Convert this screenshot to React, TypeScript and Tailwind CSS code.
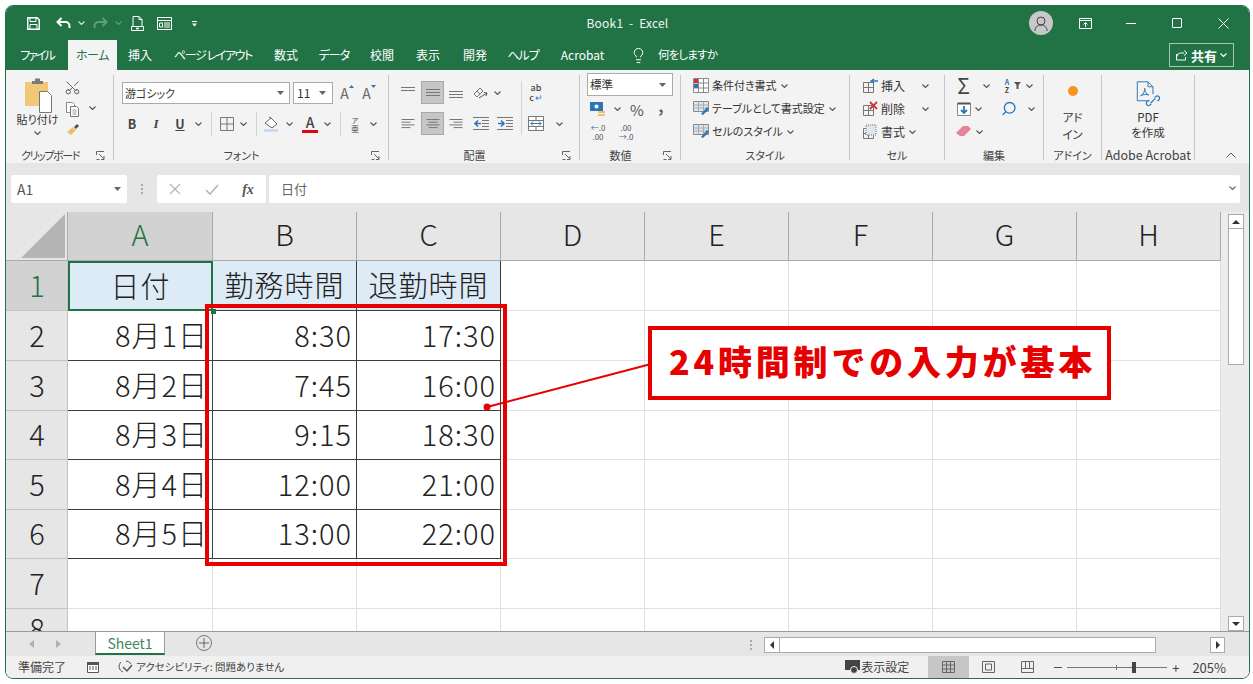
import type { ReactNode } from "react";
import { Scissors, Search, Lightbulb } from "lucide-react";

const columns = ["A", "B", "C", "D", "E", "F", "G", "H"];

const rows = [
  ["日付", "勤務時間", "退勤時間"],
  ["8月1日", "8:30", "17:30"],
  ["8月2日", "7:45", "16:00"],
  ["8月3日", "9:15", "18:30"],
  ["8月4日", "12:00", "21:00"],
  ["8月5日", "13:00", "22:00"],
  [],
  [],
];

const tabs = [
  { label: "ファイル", w: "w-[62px] tracking-[-2px]" },
  { label: "ホーム", w: "w-[49px] tracking-[-0.5px]", active: true },
  { label: "挿入", w: "w-[46px]" },
  { label: "ページ レイアウト", w: "w-[100px] tracking-[-1.400px]" },
  { label: "数式", w: "w-[46px]" },
  { label: "データ", w: "w-[50px] tracking-[-1px]" },
  { label: "校閲", w: "w-[46px]" },
  { label: "表示", w: "w-[46px]" },
  { label: "開発", w: "w-[48px]" },
  { label: "ヘルプ", w: "w-[48px] tracking-[-1px]" },
  { label: "Acrobat", w: "w-[71px]" },
];

function Chev({ color = "#555" }: { color?: string }) {
  return (
    <svg width="7" height="4" viewBox="0 0 7 4" className="shrink-0">
      <path d="M.5.5l3 3 3-3" fill="none" stroke={color} strokeWidth="1.1" />
    </svg>
  );
}

function Caret() {
  return (
    <svg width="7" height="4" viewBox="0 0 7 4" className="shrink-0">
      <path d="M0 0h7L3.500 4z" fill="#666" />
    </svg>
  );
}

function Launcher() {
  return (
    <svg width="9" height="9" viewBox="0 0 9 9">
      <path d="M.5 4V.5H8M.5 8.500h3M3 3l5 5M8 5v3.500H5" fill="none" stroke="#666" />
    </svg>
  );
}

function Cell({ className, children }: { className: string; children?: ReactNode }) {
  return <div className={`flex h-full shrink-0 items-center justify-center ${className}`}>{children}</div>;
}

function Sep({ className }: { className: string }) {
  return (
    <div className={`flex h-full shrink-0 items-center justify-center ${className}`}>
      <div className="h-[24px] w-px bg-[#d4d4d4]" />
    </div>
  );
}

function Group({
  className,
  label,
  labelClass = "text-[11px]",
  launcher,
  children,
}: {
  className: string;
  label: string;
  labelClass?: string;
  launcher?: boolean;
  children: ReactNode;
}) {
  return (
    <div className={`flex h-[85px] shrink-0 flex-col border-r border-[#c6c6c6] ${className}`}>
      <div className="flex-1">{children}</div>
      <div className="flex h-[10px] items-center">
        <span className={`flex-1 whitespace-nowrap text-center leading-none text-[#444] ${labelClass}`}>{label}</span>
        {launcher && (
          <span className="flex w-[19px] items-center justify-start pl-[2px]">
            <Launcher />
          </span>
        )}
      </div>
    </div>
  );
}

function Lines({ widths, align = "left" }: { widths: number[]; align?: "left" | "center" | "right" }) {
  return (
    <svg width="14" height="11" viewBox="0 0 14 11">
      {widths.map((w, i) => {
        const x = align === "left" ? 0.5 : align === "right" ? 13.5 - w : 7 - w / 2;
        return <path key={i} d={`M${x} ${1.5 + i * 2.700}h${w}`} stroke="#777" />;
      })}
    </svg>
  );
}

function Indent({ flip }: { flip?: boolean }) {
  return (
    <svg width="16" height="13" viewBox="0 0 16 13">
      <path d="M0 .5h16M0 12.500h16M9 3.500h7M9 6.500h7M9 9.500h7" stroke="#777" />
      <path d={flip ? "M7 6.500H1M4 3.500l3 3-3 3" : "M8 6.500H2M5 3.500l-3 3 3 3"} fill="none" stroke="#2e75b6" strokeWidth="1.600" />
    </svg>
  );
}

function SmallTable({ accent }: { accent?: "x" | "plus" | "fmt" }) {
  return (
    <svg width="16" height="15" viewBox="0 0 16 15">
      <path d="M.5 4.500h10v10H.5zM.5 9.500h10M5.500 4.500v10" fill="none" stroke="#777" />
      {accent === "x" && <path d="M7 1l7 7M14 1L7 8" stroke="#d13438" strokeWidth="1.800" />}
      {accent === "plus" && <path d="M15 3H8M11 1L8 3l3 2" fill="none" stroke="#2e75b6" strokeWidth="1.300" />}
      {accent === "fmt" && <path d="M3 1h10v10H3z" fill="#dfe6ee" stroke="#777" strokeDasharray="1 1" />}
    </svg>
  );
}

function TableStyleIcon() {
  return (
    <svg width="17" height="15" viewBox="0 0 17 15">
      <path d="M.5.500h15v10H.5z" fill="#dce6f1" stroke="#888" />
      <path d="M.5 4h15M.5 7h15M5.500.5v10M10.500.5v10" stroke="#aaa" />
      <path d="M8 13l6-7 2 2-6 6z" fill="#2e75b6" />
    </svg>
  );
}

function GrowFont({ up }: { up?: boolean }) {
  return (
    <div className="flex items-start">
      <span className="text-[14px] leading-none text-[#666]">A</span>
      <svg width="5" height="3" viewBox="0 0 5 3" className="mt-[-1px]">
        <path d={up ? "M0 3h5L2.500 0z" : "M0 0h5L2.500 3z"} fill="#2e75b6" />
      </svg>
    </div>
  );
}

function TitleBar() {
  return (
    <div className="grid h-[34px] grid-cols-[1fr_auto_1fr] items-center bg-[#217346] px-[3px] text-white">
      <div className="flex items-center pl-[18px]">
        <svg width="13" height="13" viewBox="0 0 13 13">
          <path d="M.75.75h9.500l2 2v9.500H.75z" fill="none" stroke="#fff" strokeWidth="1.400" />
          <path d="M3 1v3.500h6V1M3 12V7.500h7V12" fill="none" stroke="#fff" />
        </svg>
        <svg width="15" height="12" viewBox="0 0 15 12" className="ml-[16px]">
          <path d="M5.500 1L1.500 5l4 4M2 5h7.500a4 4 0 0 1 4 4v2" fill="none" stroke="#fff" strokeWidth="2" />
        </svg>
        <span className="ml-[7px]"><Chev color="#d5e5dc" /></span>
        <svg width="15" height="12" viewBox="0 0 15 12" className="ml-[8px]">
          <path d="M9.500 1l4 4-4 4M13 5H5.500a4 4 0 0 0-4 4v2" fill="none" stroke="#5f9d7c" strokeWidth="2" />
        </svg>
        <span className="ml-[7px]"><Chev color="#5f9d7c" /></span>
        <svg width="13" height="15" viewBox="0 0 13 15" className="ml-[9px]">
          <path d="M2 10V.5h6l3 3V10M8 .5v3h3" fill="none" stroke="#fff" />
          <path d="M.5 10.500h12v4H.5z" fill="none" stroke="#fff" />
          <path d="M5 12.500h3" stroke="#fff" strokeWidth="1.500" />
        </svg>
        <svg width="15" height="13" viewBox="0 0 15 13" className="ml-[13px]">
          <path d="M.5.500h14v12H.5zM.5 3.500h14" fill="none" stroke="#fff" />
          <path d="M2.500 6h3v4h-3zM7 6h6M7 8h6M7 10h6" fill="none" stroke="#fff" />
        </svg>
        <svg width="7" height="7" viewBox="0 0 7 7" className="ml-[19px]">
          <path d="M1 1.500h5" stroke="#fff" />
          <path d="M1 3.500h5L3.500 6.500z" fill="#fff" />
        </svg>
      </div>
      <div className="text-[12px] leading-none tracking-[0.2px] text-[#f0f5f2]">Book1 &nbsp;-&nbsp; Excel</div>
      <div className="flex h-full items-center justify-end">
        <div className="mr-[9px] flex h-[24px] w-[24px] items-center justify-center rounded-full bg-[#c8c8c8]">
          <svg width="14" height="15" viewBox="0 0 14 15">
            <circle cx="7" cy="5" r="4" fill="none" stroke="#444" />
            <path d="M1 15c0-4 2.500-6 6-6s6 2 6 6" fill="none" stroke="#444" />
          </svg>
        </div>
        <Cell className="w-[46px]">
          <svg width="13" height="11" viewBox="0 0 13 11">
            <path d="M.5.500h12v10H.5zM.5 2.500h12" fill="none" stroke="#fff" />
            <path d="M6.500 9V4.500M4.500 6.500l2-2 2 2" fill="none" stroke="#fff" />
          </svg>
        </Cell>
        <Cell className="w-[46px]"><div className="h-px w-[10px] bg-white" /></Cell>
        <Cell className="w-[46px]"><div className="h-[10px] w-[10px] rounded-[1px] border border-white" /></Cell>
        <Cell className="w-[46px]">
          <svg width="11" height="11" viewBox="0 0 11 11">
            <path d="M.5.500l10 10M10.500.500l-10 10" stroke="#fff" />
          </svg>
        </Cell>
      </div>
    </div>
  );
}

function TabRow() {
  return (
    <div className="flex h-[30px] items-center bg-[#217346] pr-[15px] text-[12px] leading-none text-white [font-feature-settings:'palt']">
      {tabs.map((t) => (
        <div
          key={t.label}
          className={`flex h-full shrink-0 items-center justify-center whitespace-nowrap ${t.w} ${
            t.active ? "bg-[#f3f3f3] text-[#217346]" : ""
          }`}
        >
          {t.label}
        </div>
      ))}
      <Lightbulb size={17} strokeWidth={1.4} className="ml-[12px]" />
      <span className="ml-[11px] whitespace-nowrap text-[11.500px] tracking-[-0.8px]">何をしますか</span>
      <div className="ml-auto flex h-[24px] w-[65px] items-center justify-center gap-[3px] border border-[#a6c7b5]">
        <svg width="12" height="12" viewBox="0 0 12 12">
          <path d="M8 4H4.500C2.500 4 1.500 5.500 1 7.500M8 1.500L11 4 8 6.500M9.500 8v3H.5V5" fill="none" stroke="#fff" />
        </svg>
        <span className="text-[13px] font-bold">共有</span>
        <Chev color="#fff" />
      </div>
    </div>
  );
}

function ClipboardGroup() {
  return (
    <Group className="w-[108px]" label="クリップボード" labelClass="text-[11px] tracking-[-1.400px]" launcher>
      <div className="flex h-[71px]">
        <div className="flex w-[56px] flex-col items-center pl-[7px] pt-[3px]">
          <svg width="30" height="35" viewBox="0 0 30 35" className="ml-[3px]">
            <path d="M1 4h23v24H1z" fill="#f0c878" />
            <path d="M8 3h3V.5h5V3h3v3H8z" fill="#7a7a7a" />
            <path d="M15.500 13.500h8l4 4v17h-12z" fill="#fff" stroke="#777" />
          </svg>
          <span className="mt-[1px] whitespace-nowrap text-[11px] leading-none text-[#333]">貼り付け</span>
          <span className="mt-[6px]"><Chev /></span>
        </div>
        <div className="flex w-[21px] flex-col items-center gap-[6px] pt-[4px]">
          <Scissors size={17} strokeWidth={1.3} className="-rotate-90 text-[#555]" />
          <svg width="13" height="15" viewBox="0 0 13 15">
            <path d="M.5.500h6l2 2v8H.5z" fill="#fff" stroke="#888" />
            <path d="M4.500 4.500h6l2 2v8h-8z" fill="#fff" stroke="#777" />
            <path d="M6.500 8h4M6.500 10h4M6.500 12h4" stroke="#999" />
          </svg>
          <svg width="14" height="13" viewBox="0 0 14 13">
            <path d="M1 9l6-5 3 3-5 5z" fill="#eebd6e" />
            <path d="M8 4l3-3 2 2-3 3z" fill="#555" />
          </svg>
        </div>
        <div className="flex h-[66px] items-center pl-[6px]"><Chev /></div>
      </div>
    </Group>
  );
}

function FontGroup() {
  return (
    <Group className="w-[275px]" label="フォント" launcher>
      <div className="pl-[6px] pt-[7px]">
        <div className="flex h-[22px] items-center">
          <div className="ml-[2px] flex h-full w-[168px] items-center justify-between border border-[#ababab] bg-white pl-[2px] pr-[5px] text-[11px] leading-none text-[#333]">
            游ゴシック <Caret />
          </div>
          <div className="ml-[3px] flex h-full w-[40px] items-center justify-between border border-[#ababab] bg-white pl-[3px] pr-[6px] text-[12px] leading-none text-[#333]">
            11 <Caret />
          </div>
          <Cell className="ml-[3px] w-[22px]"><GrowFont up /></Cell>
          <Cell className="w-[22px]"><GrowFont /></Cell>
        </div>
        <div className="mt-[8px] flex h-[24px] items-center text-[#444]">
          <Cell className="w-[24px] text-[12.500px] font-bold">B</Cell>
          <Cell className="w-[24px] font-['Liberation_Serif',serif] text-[13px] font-bold italic">I</Cell>
          <Cell className="w-[24px] text-[12.500px] font-bold underline">U</Cell>
          <Cell className="w-[13px]"><Chev /></Cell>
          <Sep className="w-[13px]" />
          <Cell className="w-[17px]">
            <svg width="14" height="14" viewBox="0 0 14 14">
              <path d="M.5.500h13v13H.5zM7 .5v13M.5 7h13" fill="none" stroke="#777" />
            </svg>
          </Cell>
          <Cell className="w-[16px]"><Chev /></Cell>
          <Sep className="w-[10px]" />
          <Cell className="w-[20px]">
            <svg width="15" height="16" viewBox="0 0 15 16">
              <path d="M1 7l6-5 6 6-5 4z" fill="#fff" stroke="#666" />
              <path d="M5 1l2 1" stroke="#666" />
              <path d="M0 14.500h14" stroke="#b9d3ec" strokeWidth="2" />
            </svg>
          </Cell>
          <Cell className="w-[16px]"><Chev /></Cell>
          <div className="flex h-full w-[26px] shrink-0 flex-col items-center justify-center">
            <span className="text-[14px] font-medium leading-[13px]">A</span>
            <span className="mt-px h-[3px] w-[16px] bg-[#e60012]" />
          </div>
          <Cell className="w-[8px]"><Chev /></Cell>
          <Sep className="w-[18px]" />
          <Cell className="w-[12px] flex-col text-[7px] leading-[8px]">ア<span className="text-[8px] leading-[9px]">亜</span></Cell>
          <Cell className="w-[24px]"><Chev /></Cell>
        </div>
      </div>
    </Group>
  );
}

function AlignGroup() {
  const sel = "flex h-[23px] w-[23px] items-center justify-center border border-[#a8a8a8] bg-[#c6c6c6]";
  return (
    <Group className="w-[191px]" label="配置" launcher>
      <div className="flex pl-[7px] pt-[6px]">
        <div className="w-[125px]">
          <div className="flex h-[23px] items-center">
            <Cell className="w-[24px]"><svg width="14" height="11" viewBox="0 0 14 11"><path d="M0 .5h14M0 3.500h14" stroke="#777" /></svg></Cell>
            <div className={`ml-px ${sel}`}><svg width="14" height="9" viewBox="0 0 14 9"><path d="M0 1.500h14M0 4.500h14M0 7.500h14" stroke="#777" /></svg></div>
            <Cell className="w-[24px]"><svg width="14" height="11" viewBox="0 0 14 11"><path d="M0 4.500h14M0 7.500h14M0 10.500h14" stroke="#777" /></svg></Cell>
            <Cell className="w-[25px] text-[#666]">
              <svg width="15" height="14" viewBox="0 0 15 14">
                <path d="M1 8l6-6 3 3-6 6zM4 5l3 3" fill="none" stroke="#777" />
                <path d="M6 12l8-5M11 6.500l3 .5-1 3" fill="none" stroke="#555" />
              </svg>
            </Cell>
            <Cell className="w-[8px]"><Chev /></Cell>
          </div>
          <div className="mt-[8px] flex h-[23px] items-center">
            <Cell className="w-[24px]"><Lines widths={[13, 9, 13, 9]} /></Cell>
            <div className={`ml-px ${sel}`}><Lines widths={[13, 9, 13, 9]} align="center" /></div>
            <Cell className="w-[24px]"><Lines widths={[13, 9, 13, 9]} align="right" /></Cell>
            <Cell className="w-[25px]"><Indent /></Cell>
            <Cell className="w-[24px]"><Indent flip /></Cell>
          </div>
        </div>
        <div className="h-[54px] w-px bg-[#d4d4d4]" />
        <div className="w-[46px]">
          <div className="flex h-[23px] items-center">
            <Cell className="w-[28px] flex-col text-[9px] font-medium leading-[10px] text-[#444]">
              <span>ab</span>
              <span className="flex items-center">c<span className="ml-px text-[#2e75b6]">↵</span></span>
            </Cell>
          </div>
          <div className="mt-[8px] flex h-[23px] items-center">
            <Cell className="w-[28px]">
              <svg width="16" height="15" viewBox="0 0 16 15">
                <path d="M.5.500h15v14H.5zM.5 4.500h15M.5 10.500h15M8 .5v4M8 10.500v4" fill="#fff" stroke="#777" />
                <path d="M3 7.500h10M5 5.500l-2 2 2 2M11 5.500l2 2-2 2" fill="none" stroke="#2e75b6" />
              </svg>
            </Cell>
            <Cell className="w-[18px]"><Chev /></Cell>
          </div>
        </div>
      </div>
    </Group>
  );
}

function NumberGroup() {
  return (
    <Group className="w-[101px]" label="数値" launcher>
      <div className="-mt-[2px] pl-[7px]">
        <div className="flex h-[23px] w-[86px] items-center justify-between border border-[#ababab] bg-white pl-[2px] pr-[6px] text-[11.500px] leading-none text-[#333]">
          標準 <Caret />
        </div>
        <div className="mt-[2px] flex h-[22px] items-center">
          <Cell className="w-[22px]">
            <svg width="16" height="15" viewBox="0 0 16 15">
              <path d="M0 0h13v9H0z" fill="#2e75b6" />
              <circle cx="6.500" cy="4.500" r="2" fill="#fff" />
              <path d="M8 9h7v2H8zM8 12h7v2H8z" fill="#eebd6e" />
            </svg>
          </Cell>
          <Cell className="w-[16px]"><Chev /></Cell>
          <Cell className="w-[24px] text-[15px] leading-none text-[#555]">%</Cell>
          <Cell className="w-[24px] pb-[8px] text-[15px] font-bold leading-none text-[#555]">,</Cell>
        </div>
        <div className="mt-px flex h-[22px] items-center text-[8px] leading-[9px] text-[#555]">
          <Cell className="w-[22px] flex-col"><span><span className="text-[#2e75b6]">←</span>.0</span><span>.00</span></Cell>
          <Cell className="ml-[4px] w-[26px] flex-col"><span>.00</span><span><span className="text-[#2e75b6]">→</span>.0</span></Cell>
        </div>
      </div>
    </Group>
  );
}

function StyleRow({ icon, text }: { icon: ReactNode; text: string }) {
  return (
    <div className="flex h-[23px] items-center text-[11px] leading-none text-[#333]">
      <span className="flex w-[19px] shrink-0 items-center">{icon}</span>
      <span className="whitespace-nowrap">{text}</span>
      <span className="ml-[4px]"><Chev /></span>
    </div>
  );
}

function StylesGroup() {
  return (
    <Group className="w-[169px]" label="スタイル">
      <div className="-mt-px pl-[12px]">
        <StyleRow
          text="条件付き書式"
          icon={
            <svg width="16" height="15" viewBox="0 0 16 15">
              <path d="M.5.500h15v14H.5zM.5 5h15M.5 10h15M5.500.5v14M10.500.5v14" fill="#fff" stroke="#888" />
              <path d="M1 1h4v4H1z" fill="#d13438" />
              <path d="M1 6h4v4H1z" fill="#2e75b6" />
            </svg>
          }
        />
        <StyleRow text="テーブルとして書式設定" icon={<TableStyleIcon />} />
        <StyleRow text="セルのスタイル" icon={<TableStyleIcon />} />
      </div>
    </Group>
  );
}

function CellsGroup() {
  return (
    <Group className="w-[95px]" label="セル">
      <div className="-mt-px pl-[13px] text-[12px] leading-none text-[#333]">
        <div className="flex h-[23px] items-center gap-[2px]"><SmallTable accent="plus" />挿入<span className="ml-[15px]"><Chev /></span></div>
        <div className="flex h-[23px] items-center gap-[2px]"><SmallTable accent="x" />削除<span className="ml-[15px]"><Chev /></span></div>
        <div className="flex h-[23px] items-center gap-[2px]"><SmallTable accent="fmt" />書式<span className="ml-[2px]"><Chev /></span></div>
      </div>
    </Group>
  );
}

function EditGroup() {
  return (
    <Group className="w-[99px]" label="編集">
      <div className="-mt-px pl-[11px]">
        <div className="flex h-[23px] items-center">
          <Cell className="w-[15px] text-[21px] leading-none text-[#444]">Σ</Cell>
          <Cell className="w-[30px]"><Chev /></Cell>
          <Cell className="w-[12px] flex-col text-[7px] font-bold leading-[8px] text-[#2e75b6]">A<span className="text-[#444]">Z</span></Cell>
          <svg width="7" height="7" viewBox="0 0 7 7" className="ml-px"><path d="M0 0h7L4.500 3v4h-2V3z" fill="#555" /></svg>
          <Cell className="w-[16px]"><Chev /></Cell>
        </div>
        <div className="flex h-[23px] items-center">
          <Cell className="w-[15px]">
            <svg width="14" height="14" viewBox="0 0 14 14">
              <path d="M.5 1.500h13v12H.5z" fill="#fff" stroke="#888" />
              <path d="M.5 1.500h13" stroke="#555" strokeWidth="2" />
              <path d="M7 4v7M4 8l3 3 3-3" fill="none" stroke="#2e75b6" strokeWidth="1.800" />
            </svg>
          </Cell>
          <Cell className="w-[15px]"><Chev /></Cell>
          <Cell className="ml-[15px] w-[16px]"><Search size={17} strokeWidth={2} className="-scale-x-100 text-[#2e75b6]" /></Cell>
          <Cell className="ml-[6px] w-[16px]"><Chev /></Cell>
        </div>
        <div className="flex h-[23px] items-center">
          <Cell className="w-[15px]">
            <svg width="15" height="11" viewBox="0 0 15 11">
              <path d="M0 7l7-7h5l3 3-7 7H4z" fill="#e8819b" />
            </svg>
          </Cell>
          <Cell className="w-[17px]"><Chev /></Cell>
        </div>
      </div>
    </Group>
  );
}

function AddinGroup() {
  return (
    <Group className="w-[58px]" label="アドイン">
      <div className="flex flex-col items-center pt-[11px] text-[11.500px] leading-[17px] text-[#333]">
        <div className="h-[10px] w-[10px] rounded-full bg-[#f7941d]" />
        <span className="mt-[13px]">アド</span>
        <span>イン</span>
      </div>
    </Group>
  );
}

function AcrobatGroup() {
  return (
    <Group className="w-[93px]" label="Adobe Acrobat" labelClass="text-[12.500px]">
      <div className="flex flex-col items-center pt-[6px] text-[11.500px] leading-[15px] text-[#333]">
        <svg width="24" height="28" viewBox="0 0 28 34">
          <path d="M16 24H1V1h13l6 6v9M14 1v6h6" fill="none" stroke="#2e75b6" strokeWidth="1.200" />
          <path d="M5 18c3-1 5-5 5-9 0 4 2 7 5 8-3-1-7-1-10 1z" fill="none" stroke="#2e75b6" strokeWidth="1.200" />
          <path d="M17 27l6-6M15 24a3 3 0 0 0 0 6l3-2M25 24a3 3 0 0 0 0-6l-3 2" fill="none" stroke="#2e75b6" strokeWidth="1.400" />
        </svg>
        <span className="mt-px">PDF</span>
        <span>を作成</span>
      </div>
    </Group>
  );
}

function Ribbon() {
  return (
    <div className="flex h-[93px] bg-[#f3f3f3] pt-[5px] [font-feature-settings:'palt']">
      <ClipboardGroup />
      <FontGroup />
      <AlignGroup />
      <NumberGroup />
      <StylesGroup />
      <CellsGroup />
      <EditGroup />
      <AddinGroup />
      <AcrobatGroup />
      <div className="flex h-[85px] flex-1 items-end justify-end pb-[2px] pr-[13px]">
        <svg width="10" height="6" viewBox="0 0 10 6"><path d="M.5 5.500L5 1l4.500 4.500" fill="none" stroke="#555" /></svg>
      </div>
    </div>
  );
}

function FormulaBar() {
  return (
    <div className="flex h-[49px] items-start bg-[#e6e6e6] pl-[5px] pr-[9px] pt-[12px]">
      <div className="flex h-[28px] w-[116px] items-center justify-between rounded-[2px] bg-white pl-[6px] pr-[6px] text-[14px] leading-none text-[#555]">
        A1 <Caret />
      </div>
      <div className="flex h-[28px] w-[30px] flex-col items-center justify-center gap-[2px]">
        <span className="h-[2px] w-[2px] bg-[#aaa]" />
        <span className="h-[2px] w-[2px] bg-[#aaa]" />
        <span className="h-[2px] w-[2px] bg-[#aaa]" />
      </div>
      <div className="flex h-[28px] w-[109px] items-center rounded-[2px] bg-white">
        <Cell className="w-[36px]">
          <svg width="12" height="12" viewBox="0 0 12 12"><path d="M1 1l10 10M11 1L1 11" stroke="#b5b5b5" strokeWidth="1.300" /></svg>
        </Cell>
        <Cell className="w-[37px]">
          <svg width="14" height="11" viewBox="0 0 14 11"><path d="M1 6l4 4 8-9" fill="none" stroke="#b5b5b5" strokeWidth="1.600" /></svg>
        </Cell>
        <Cell className="w-[36px] font-['Liberation_Serif',serif] text-[14px] font-bold italic text-[#555]">fx</Cell>
      </div>
      <div className="ml-[3px] flex h-[28px] flex-1 items-center justify-between rounded-[2px] bg-white pb-[2px] pl-[12px] pr-[4px] text-[13px] leading-none text-[#666]">
        日付
        <Chev color="#666" />
      </div>
    </div>
  );
}

function Grid() {
  return (
    <div className="grid w-[1215px] shrink-0 grid-cols-[62px_145px_repeat(7,144px)] grid-rows-[49px_50px_50px_50px_49px_50px_49px_50px] font-light text-[29px] leading-none text-[#222]">
      <div className="flex items-end justify-end border-b border-r border-[#ababab] bg-[#e6e6e6] pb-[2px] pr-[2px]">
        <svg width="44" height="44" viewBox="0 0 44 44"><path d="M44 0v44H0z" fill="#b4b4b4" /></svg>
      </div>
      {columns.map((c, i) => (
        <div
          key={c}
          className={`flex items-center justify-center border-b border-r border-[#ababab] pb-[6px] ${
            i === 0 ? "bg-[#d2d2d2] text-[#217346]" : "bg-[#e6e6e6]"
          }`}
        >
          {c}
        </div>
      ))}
      {rows.map((row, r) => (
        <div key={r} className="contents">
          <div
            className={`flex items-center justify-center border-b border-r border-[#c4c4c4] pl-px ${
              r === 7 ? "pt-[4px]" : "pb-[3px]"
            } ${r === 0 ? "bg-[#d2d2d2] text-[#217346]" : "bg-[#e6e6e6]"}`}
          >
            {r + 1}
          </div>
          {columns.map((c, i) => {
            const text = row[i];
            if (text === undefined) {
              return <div key={c} className="border-b border-r border-[#e0e0e0] bg-white" />;
            }
            if (r === 0) {
              return (
                <div
                  key={c}
                  className={`flex items-center justify-center whitespace-nowrap bg-[#ddebf7] pb-[2px] ${
                    i === 0 ? "border-2 border-[#217346] tracking-[1px]" : "border-b border-r border-[#3c3c3c] tracking-[1px]"
                  }`}
                >
                  {text}
                </div>
              );
            }
            return (
              <div key={c} className="flex items-center justify-end whitespace-nowrap border-b border-r border-[#3c3c3c] bg-white pb-[3px] pr-[4px] tracking-[1px]">
                {text}
              </div>
            );
          })}
        </div>
      ))}
    </div>
  );
}

function VScroll() {
  return (
    <div className="flex w-[28px] shrink-0 flex-col bg-[#ececec] pl-[7px] pt-[2px]">
      <div className="flex h-[15px] w-[16px] items-center justify-center border border-[#ababab] bg-white">
        <svg width="8" height="4" viewBox="0 0 8 4"><path d="M0 4h8L4 0z" fill="#333" /></svg>
      </div>
      <div className="h-[136px] w-[16px] border border-t-0 border-[#ababab] bg-white" />
      <div className="flex-1" />
      <div className="flex h-[15px] w-[16px] items-center justify-center border border-[#ababab] bg-white">
        <svg width="8" height="4" viewBox="0 0 8 4"><path d="M0 0h8L4 4z" fill="#333" /></svg>
      </div>
    </div>
  );
}

function Sheet() {
  return (
    <div className="relative flex h-[419px] overflow-hidden bg-white">
      <Grid />
      <VScroll />
      {/* fill handle of A1 */}
      <div className="absolute left-[205px] top-[97px] h-[5px] w-[5px] bg-[#217346]" />
      {/* red frame over the time cells */}
      <div className="absolute left-[199px] top-[92px] h-[262px] w-[302px] border-4 border-[#e60000]" />
      <svg width="180" height="60" viewBox="0 0 180 60" className="absolute left-[474px] top-[146px]">
        <path d="M7 49L171 6" stroke="#e60000" strokeWidth="2" />
        <circle cx="7" cy="49" r="3.500" fill="#e60000" />
      </svg>
      <div className="absolute left-[642px] top-[114px] flex h-[74px] w-[463px] items-center justify-center border-4 border-[#e60000] bg-white pb-[5px] pl-[6px] text-[34px] font-black leading-none tracking-[3.800px] text-[#e60000]">
        24時間制での入力が基本
      </div>
    </div>
  );
}

function SheetTabs() {
  return (
    <div className="flex h-[25px] items-start border-t border-[#9a9a9a] bg-[#e6e6e6]">
      <div className="flex h-full w-[89px] items-center pl-[23px]">
        <svg width="5" height="8" viewBox="0 0 5 8"><path d="M5 0v8L0 4z" fill="#b0b0b0" /></svg>
        <svg width="5" height="8" viewBox="0 0 5 8" className="ml-[22px]"><path d="M0 0v8l5-4z" fill="#b0b0b0" /></svg>
      </div>
      <div className="flex h-[23px] w-[70px] items-center justify-center border-x border-b-2 border-x-[#9a9a9a] border-b-[#217346] bg-white text-[14px] leading-none text-[#3f8560]">
        Sheet1
      </div>
      <div className="ml-[31px] mt-[3px] flex h-[16px] w-[16px] items-center justify-center rounded-full border border-[#777]">
        <svg width="10" height="10" viewBox="0 0 10 10"><path d="M5 0v10M0 5h10" stroke="#666" /></svg>
      </div>
      <div className="ml-[538px] mt-[8px] flex flex-col gap-[2px]">
        <span className="h-[2px] w-[2px] bg-[#aaa]" />
        <span className="h-[2px] w-[2px] bg-[#aaa]" />
        <span className="h-[2px] w-[2px] bg-[#aaa]" />
      </div>
      <div className="ml-[12px] mt-[5px] flex h-[16px] w-[461px]">
        <div className="flex w-[16px] items-center justify-center border border-[#ababab] bg-white">
          <svg width="4" height="8" viewBox="0 0 4 8"><path d="M4 0v8L0 4z" fill="#333" /></svg>
        </div>
        <div className="w-[376px] border-y border-r border-[#ababab] bg-white" />
        <div className="flex-1" />
        <div className="flex w-[15px] items-center justify-center border border-[#ababab] bg-white">
          <svg width="4" height="8" viewBox="0 0 4 8"><path d="M0 0v8l4-4z" fill="#333" /></svg>
        </div>
      </div>
    </div>
  );
}

function StatusBar() {
  return (
    <div className="flex h-[22px] items-center bg-[#f0f0f0] pl-[12px] text-[11.500px] leading-none text-[#444] [font-feature-settings:'palt']">
      <span className="text-[12px]">準備完了</span>
      <svg width="12" height="12" viewBox="0 0 12 12" className="ml-[21px]">
        <path d="M.5 2.500h11v9H.5z" fill="#fff" stroke="#555" />
        <path d="M0 1h12v3H0z" fill="#555" />
        <path d="M2 6h2M5 6h2M8 6h2M2 8h2M5 8h2M8 8h2" stroke="#555" />
      </svg>
      <svg width="16" height="14" viewBox="0 0 16 14" className="ml-[19px]">
        <path d="M3 2a6 6 0 0 0 2 10M8 1a6 6 0 0 1 5 3" fill="none" stroke="#555" />
        <path d="M5 7l4 4 5-6" fill="none" stroke="#555" strokeWidth="1.500" />
      </svg>
      <span className="ml-[2px] text-[10.500px]">アクセシビリティ: 問題ありません</span>
      <div className="ml-auto flex h-full items-center pr-[23px]">
        <svg width="15" height="14" viewBox="0 0 15 14">
          <path d="M0 0h15v10H0z" fill="#444" />
          <circle cx="9" cy="10" r="3.500" fill="#444" stroke="#f0f0f0" />
        </svg>
        <span className="ml-px mr-[19px] text-[12px]">表示設定</span>
        <div className="flex h-full w-[41px] items-center justify-center bg-[#c6c6c6]">
          <svg width="13" height="12" viewBox="0 0 13 12">
            <path d="M.5.500h12v11H.5zM.5 4h12M.5 8h12M4.500.5v11M8.500.5v11" fill="none" stroke="#666" />
          </svg>
        </div>
        <div className="flex h-full w-[39px] items-center justify-center">
          <svg width="13" height="12" viewBox="0 0 13 12">
            <path d="M.5.500h12v11H.5zM3.500 3h6v6h-6z" fill="none" stroke="#666" />
          </svg>
        </div>
        <div className="flex h-full w-[39px] items-center justify-center">
          <svg width="13" height="12" viewBox="0 0 13 12">
            <path d="M.5.500h12v11H.5zM.5 7.500h12M4.500.5v7M8.500.5v7" fill="none" stroke="#666" />
          </svg>
        </div>
        <div className="ml-[7px] h-px w-[8px] bg-[#555]" />
        <div className="relative ml-[5px] h-px w-[100px] bg-[#777]">
          <div className="absolute left-[49px] top-[-2px] h-[5px] w-px bg-[#777]" />
          <div className="absolute left-[65px] top-[-5px] h-[11px] w-[4px] bg-[#444]" />
        </div>
        <span className="ml-[5px] text-[13px]">+</span>
        <span className="ml-[13px] text-[13px]">205%</span>
      </div>
    </div>
  );
}

export default function App() {
  return (
    <div className="h-[684px] w-[1253px] overflow-hidden bg-white pl-[5px] pt-[5px] font-['Noto_Sans_CJK_JP','Noto_Sans',sans-serif]">
      <div className="h-[674px] w-[1245px] overflow-hidden rounded-[8px] border border-[#217346]">
        <TitleBar />
        <TabRow />
        <Ribbon />
        <FormulaBar />
        <Sheet />
        <SheetTabs />
        <StatusBar />
      </div>
    </div>
  );
}
